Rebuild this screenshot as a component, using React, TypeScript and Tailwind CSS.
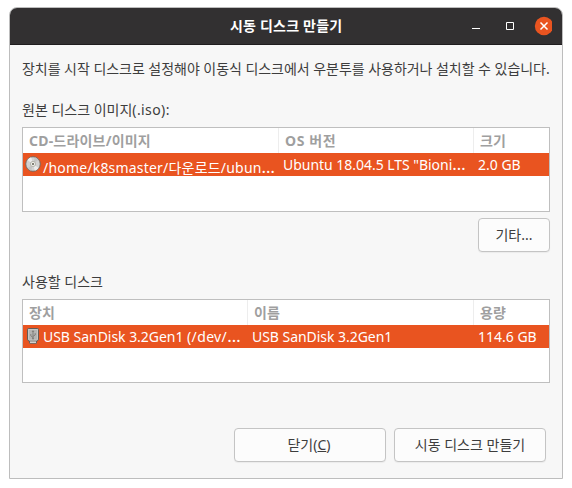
import type { ReactNode } from "react";

function DiscIcon() {
  return (
    <svg width="16" height="16" viewBox="0 0 16 16" className="block shrink-0">
      <circle cx="8" cy="8" r="7.3" fill="#d2d2d2" stroke="#75695f" strokeWidth="1" />
      <path d="M8 8L2.4 4A7 7 0 0 1 6.2 1.3ZM8 8L13.6 12A7 7 0 0 1 9.8 14.7Z" fill="#ececec" />
      <path d="M8 8L9.8 1.3A7 7 0 0 1 13.4 3.7ZM8 8L6.2 14.7A7 7 0 0 1 2.6 12.3Z" fill="#c4c4c4" />
      <circle cx="8" cy="8" r="2.6" fill="#eeeeea" stroke="#aaa9a0" strokeWidth="0.8" />
      <circle cx="8" cy="8" r="1.1" fill="#67665c" />
    </svg>
  );
}

function UsbIcon() {
  return (
    <svg width="16" height="16" viewBox="0 0 16 16" className="block shrink-0">
      <path d="M4.5 12.5h7v2.8h-7z" fill="#eeeeec" stroke="#6b625d" strokeWidth="1" />
      <path d="M2.5 1.5Q2.5.5 3.5.5h9q1 0 1 1V11q0 2-2 2h-7q-2 0-2-2Z" fill="#b4b4b2" stroke="#625c58" />
      <path d="M3.5 1.5h9V11q0 1-1 1h-7q-1 0-1-1Z" fill="none" stroke="#c6c6c4" />
      <path d="M8 3v8M8 9.4L5.8 7.8V6M8 8.4l2.2-1.4V5.2" fill="none" stroke="#80807c" strokeWidth="1" />
      <path d="M8 2l1.4 2H6.6Z" fill="#80807c" />
      <circle cx="8" cy="10.6" r="1" fill="#80807c" />
    </svg>
  );
}

function Ellipsis() {
  return <span className="text-[17px] leading-none">…</span>;
}

function Header({ children, className }: { children: ReactNode; className: string }) {
  return (
    <div className={`h-[25px] shrink-0 border-[#ededed] pl-1.5 font-bold leading-[25px] text-[#9f9f9f] ${className}`}>
      {children}
    </div>
  );
}

function Button({ children, className }: { children: ReactNode; className: string }) {
  return (
    <button
      className={`h-[34px] shrink-0 rounded-[4px] border border-[#c4c4c4] bg-[#fcfcfc] text-center leading-[32px] shadow-[0_1px_1px_#0000000d] ${className}`}
    >
      {children}
    </button>
  );
}

export default function App() {
  return (
    <div className="h-[488px] w-[572px] overflow-hidden bg-white pl-[9px] pt-[7px] font-['Noto_Sans','Noto_Sans_CJK_KR',sans-serif] text-[14px] text-[#3d3d3d]">
      <div className="flex h-[472px] w-[554px] flex-col overflow-hidden whitespace-nowrap rounded-t-[8px] border border-[#bdbdbd] bg-[#f7f7f7]">
        <div className="flex h-[37px] shrink-0 items-center border-b border-[#1f1d1e] bg-[#323031]">
          <div className="w-[220px]" />
          <div className="flex-1 text-[14px] font-bold leading-[36px] tracking-[0.2px] text-white">시동 디스크 만들기</div>
          <svg width="92" height="36" viewBox="0 0 92 36" className="shrink-0">
            <path d="M12 20.5h8" stroke="#fff" />
            <path d="M46.5 14.5h7v7h-7z" fill="none" stroke="#fff" />
            <circle cx="84" cy="18" r="9.2" fill="#e95420" />
            <path d="M80.5 14.5l7 7M87.5 14.5l-7 7" stroke="#fff" strokeWidth="1.5" />
          </svg>
          <div className="w-[10px]" />
        </div>
        <div className="flex flex-1 flex-col px-3">
          <div className="mt-[14px] h-5 leading-5 tracking-[-0.04px]">장치를 시작 디스크로 설정해야 이동식 디스크에서 우분투를 사용하거나 설치할 수 있습니다.</div>
          <div className="mt-[21px] h-5 leading-5">원본 디스크 이미지<span className="tracking-[0.4px]">(.iso):</span></div>
          <div className="mt-[7px] h-[85px] shrink-0 border border-[#bfbfbf] bg-white">
            <div className="flex">
              <Header className="w-[256px] border-r tracking-[0.2px]">CD-드라이브/이미지</Header>
              <Header className="w-[195px] border-r tracking-[0.6px]">OS 버전</Header>
              <Header className="flex-1">크기</Header>
            </div>
            <div className="flex h-[23px] bg-[#e95420] leading-[23px] text-white">
              <div className="flex w-[256px] pl-0.5 pt-[3px]">
                <DiscIcon />
                <span className="ml-0.5 leading-[24px] tracking-[0.2px]">/home/k8smaster/다운로드/ubun<Ellipsis /></span>
              </div>
              <div className="w-[195px] pl-1 tracking-[-0.03px]">Ubuntu 18.04.5 LTS "Bioni<Ellipsis /></div>
              <div className="flex-1 pl-1">2.0 GB</div>
            </div>
          </div>
          <Button className="mt-[6px] w-[72px] self-end">기타...</Button>
          <div className="mt-[20px] h-5 leading-5">사용할 디스크</div>
          <div className="mt-[7px] h-[84px] shrink-0 border border-[#bfbfbf] bg-white">
            <div className="flex">
              <Header className="w-[225px] border-r">장치</Header>
              <Header className="w-[226px] border-r">이름</Header>
              <Header className="flex-1">용량</Header>
            </div>
            <div className="flex h-[23px] bg-[#e95420] leading-[23px] text-white">
              <div className="flex w-[225px] pl-0.5">
                <div className="pt-[3px]"><UsbIcon /></div>
                <span className="ml-0.5 tracking-[-0.03px]">USB SanDisk 3.2Gen1 <span className="tracking-[0.35px]">(/dev/</span><Ellipsis /></span>
              </div>
              <div className="w-[226px] pl-1 tracking-[-0.04px]">USB SanDisk 3.2Gen1</div>
              <div className="flex-1 pl-1">114.6 GB</div>
            </div>
          </div>
          <div className="mt-[45px] flex gap-2 self-end pr-1">
            <Button className="w-[152px]"><span className="relative -left-px">닫기(<span className="underline">C</span>)</span></Button>
            <Button className="w-[152px]">시동 디스크 만들기</Button>
          </div>
        </div>
      </div>
    </div>
  );
}
